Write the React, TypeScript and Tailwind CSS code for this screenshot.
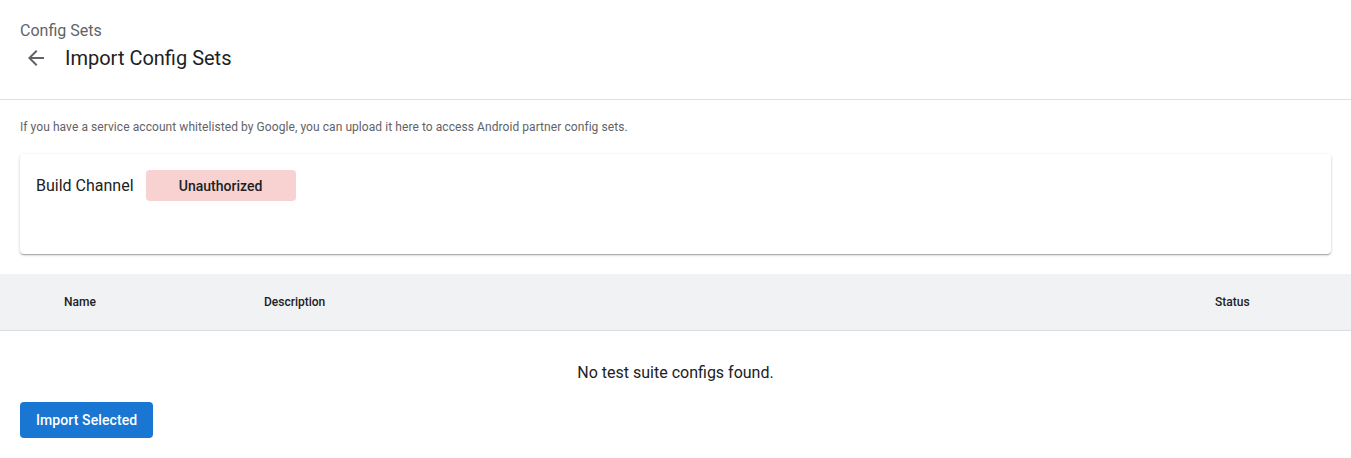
function BackIcon() {
    return (
        <svg viewBox="0 0 24 24" className="h-6 w-6 fill-[#5f6368]">
            <path d="M20 11H7.83l5.59-5.59L12 4l-8 8 8 8 1.41-1.41L7.83 13H20v-2z" />
        </svg>
    );
}

export default function App() {
    return (
        <div className="min-h-[458px] bg-white font-['Roboto',sans-serif] text-[#202124]">
            <div className="border-b border-[#e0e0e0] px-5 pt-[19px] pb-[27px]">
                <div className="text-base leading-6 text-[#5f6368]">Config Sets</div>
                <div className="flex h-[29px] items-center">
                    <button type="button" className="ml-1 flex items-center" aria-label="Back">
                        <BackIcon />
                    </button>
                    <h1 className="ml-[17px] text-xl leading-[28px] text-[#202124]">
                        Import Config Sets
                    </h1>
                </div>
            </div>

            <p className="px-5 pt-[19px] text-xs leading-4 tracking-[0.07px] text-[#5f6368]">
                If you have a service account whitelisted by Google, you can upload it here to
                access Android partner config sets.
            </p>

            <div className="mx-5 mt-[19px] h-[100px] rounded bg-white px-4 pt-4 shadow-[0_1px_3px_rgba(0,0,0,0.2),0_1px_1px_rgba(0,0,0,0.14),0_2px_1px_-1px_rgba(0,0,0,0.12)]">
                <div className="flex items-center gap-3">
                    <span className="text-base leading-6 text-[#202124]">Build Channel</span>
                    <span className="flex h-[31px] w-[150px] items-center justify-center rounded bg-[#f8d2d0] text-sm font-medium text-[#202124]">
                        Unauthorized
                    </span>
                </div>
            </div>

            <div className="mt-5">
                <div className="flex h-[57px] items-center border-b border-[#dadce0] bg-[#f1f2f4] text-xs font-medium text-[#202124]">
                    <div className="w-[264px] pl-16">Name</div>
                    <div className="flex-1">Description</div>
                    <div className="w-[136px]">Status</div>
                </div>
                <div className="pt-[30px] text-center text-base leading-6 text-[#202124]">
                    No test suite configs found.
                </div>
            </div>

            <div className="px-5 pt-[17px]">
                <button
                    type="button"
                    className="h-9 rounded bg-[#1976d2] px-4 text-sm font-medium tracking-[0.1px] text-white"
                >
                    Import Selected
                </button>
            </div>
        </div>
    );
}
